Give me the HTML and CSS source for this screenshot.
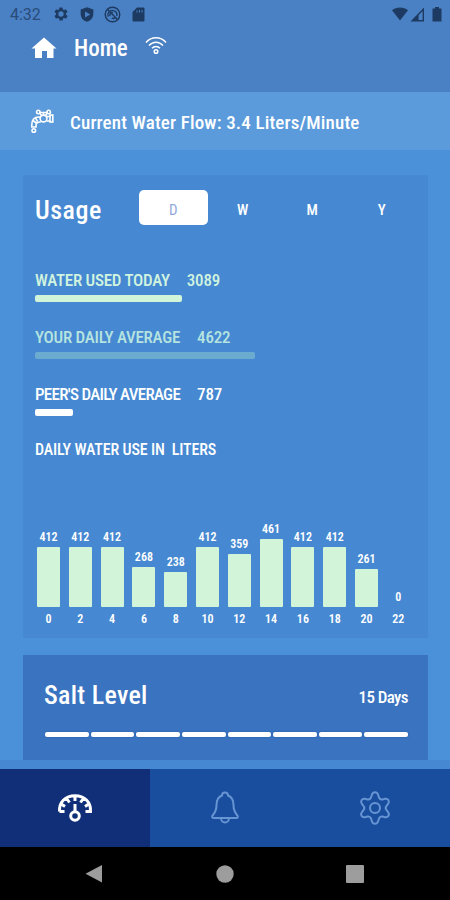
FILE: index.html
```html
<!DOCTYPE html>
<html lang="en">
<head>
    <meta charset="UTF-8">
    <meta name="viewport" content="width=device-width, initial-scale=1.0">
    <title>Home</title>
    <link rel="stylesheet" href="styles.css">
</head>
<body>
    <div class="phone">
        <header class="header">
            <div class="status">
                <span class="clock">4:32</span>
                <svg class="status-gear" width="16" height="16" viewBox="0 0 24 24"><path fill-rule="evenodd" d="M19.4 13a7.500 7.500 0 0 0 0-2l2.100-1.600a.5.5 0 0 0 .1-.6l-2-3.500a.5.5 0 0 0-.6-.2l-2.500 1a7.300 7.300 0 0 0-1.700-1l-.4-2.600a.5.5 0 0 0-.5-.4h-4a.5.5 0 0 0-.5.4L9.200 5.100a7.700 7.700 0 0 0-1.700 1l-2.500-1a.5.5 0 0 0-.6.2l-2 3.500a.5.5 0 0 0 .1.600L4.600 11a8 8 0 0 0 0 2l-2.100 1.600a.5.5 0 0 0-.1.600l2 3.500c.1.200.4.300.6.200l2.500-1c.5.400 1.100.7 1.700 1l.4 2.600c0 .3.200.4.500.4h4c.3 0 .5-.1.5-.4l.4-2.600a7.300 7.300 0 0 0 1.700-1l2.500 1c.2.100.5 0 .6-.2l2-3.500a.5.5 0 0 0-.1-.6zM12 16a4 4 0 1 1 0-8 4 4 0 0 1 0 8z"/></svg>
                <svg class="status-shield" width="16" height="17" viewBox="0 0 24 24"><path fill-rule="evenodd" d="M12 1L2.500 4.500V11c0 6 4 10.500 9.500 12 5.500-1.500 9.500-6 9.500-12V4.500zM9 7.500l8 4.500-8 4.500z"/></svg>
                <svg class="status-sync" width="17" height="17" viewBox="0 0 24 24"><circle cx="12" cy="12" r="10.300"/><path d="M6 15c-2-5 2-9 7-8.500 4 .5 6 4 5 7.500M8.500 14c-1-3 1-5 4-4.500M5 5l14 14M11 17c2 1 4 .5 5.500-1"/></svg>
                <svg class="status-card" width="13" height="15" viewBox="0 0 13 15"><path fill-rule="evenodd" d="M5 .5h6.500a1 1 0 0 1 1 1v12a1 1 0 0 1-1 1h-10a1 1 0 0 1-1-1V5zM4.500 3.500v2h1v-2zM7 3v2.500h1V3zM9.500 3v2.500h1V3z"/></svg>
                <div class="signals">
                    <svg width="18" height="14" viewBox="0 0 18 14"><path d="M1 3.200C5.500-.5 12.500-.5 17 3.200L9 13.500z"/></svg>
                    <svg width="15" height="15" viewBox="0 0 15 15"><path fill-rule="evenodd" d="M14 .5v14H.5zM12.600 4v9h-4V8.200z"/></svg>
                    <svg class="battery" width="10" height="15" viewBox="0 0 10 15"><path d="M3 0h4v1.500h2.500v13H.5v-13H3z"/></svg>
                </div>
            </div>
            <div class="title">
                <svg width="26" height="22" viewBox="0 0 26 22"><path fill="#fff" d="M13 .5l12.500 11H22.500V21H16v-7h-5v7H4v-9.500H.5z"/></svg>
                <h1><span class="text">Home</span></h1>
                <svg class="wifi" width="22" height="19" viewBox="0 0 22 19"><path d="M1 6.500C6.500.2 15.500.2 21 6.500M4 9.500c4-4.500 10-4.500 14 0M7 12.300c2.400-2.500 5.600-2.500 8 0"/><circle cx="11" cy="15.500" r="1.800"/></svg>
            </div>
        </header>

        <div class="flow">
            <svg width="25" height="25" viewBox="0 0 25 25">
                <path d="M1.800 18v-2c0-5.500 2.500-8 7-8h1.500M6 18v-1.500c0-2.500 1-3.500 4-3.500h.8M16.500 7.500h4M16.500 12h4M13.500 6V3.500M9.500 3.500h8M1 18h5.800M3 11.500l3.200 2.500M5.500 9l2 3.500M10 4.500l1.500 2M17 4.500l-1.500 2"/>
                <circle cx="13.500" cy="9.500" r="3.400"/>
                <circle cx="8.300" cy="3" r="1.700"/>
                <circle cx="18.700" cy="3" r="1.700"/>
                <rect x="20" y="6" width="2.800" height="7"/>
                <circle cx="3.800" cy="21.500" r="1.800"/>
            </svg>
            <span class="text">Current Water Flow: 3.4 Liters/Minute</span>
        </div>

        <main class="content">
            <section class="usage">
                <div class="usage-head">
                    <h2><span class="text">Usage</span></h2>
                    <div class="tabs">
                        <span class="tab active"><span class="text">D</span></span>
                        <span class="tab"><span class="text">W</span></span>
                        <span class="tab"><span class="text">M</span></span>
                        <span class="tab"><span class="text">Y</span></span>
                    </div>
                </div>

                <div class="stat today">
                    <p><span class="name text">WATER USED TODAY</span><span class="value text">3089</span></p>
                    <div class="line"></div>
                </div>
                <div class="stat average">
                    <p><span class="name text">YOUR DAILY AVERAGE</span><span class="value text">4622</span></p>
                    <div class="line"></div>
                </div>
                <div class="stat peers">
                    <p><span class="name text">PEER'S DAILY AVERAGE</span><span class="value text">787</span></p>
                    <div class="line"></div>
                </div>

                <h3><span class="text">DAILY WATER USE IN&nbsp; LITERS</span></h3>
                <div class="chart">
                    <div class="col"><span>412</span><div class="bar" style="height: 60px"></div><span class="hour">0</span></div>
                    <div class="col"><span>412</span><div class="bar" style="height: 60px"></div><span class="hour">2</span></div>
                    <div class="col"><span>412</span><div class="bar" style="height: 60px"></div><span class="hour">4</span></div>
                    <div class="col"><span>268</span><div class="bar" style="height: 40px"></div><span class="hour">6</span></div>
                    <div class="col"><span>238</span><div class="bar" style="height: 35px"></div><span class="hour">8</span></div>
                    <div class="col"><span>412</span><div class="bar" style="height: 60px"></div><span class="hour">10</span></div>
                    <div class="col"><span>359</span><div class="bar" style="height: 53px"></div><span class="hour">12</span></div>
                    <div class="col"><span>461</span><div class="bar" style="height: 68px"></div><span class="hour">14</span></div>
                    <div class="col"><span>412</span><div class="bar" style="height: 60px"></div><span class="hour">16</span></div>
                    <div class="col"><span>412</span><div class="bar" style="height: 60px"></div><span class="hour">18</span></div>
                    <div class="col"><span>261</span><div class="bar" style="height: 38px"></div><span class="hour">20</span></div>
                    <div class="col"><span>0</span><div class="bar" style="height: 0"></div><span class="hour">22</span></div>
                </div>
            </section>

            <section class="salt">
                <div class="salt-head">
                    <h2><span class="text">Salt Level</span></h2>
                    <span class="days text">15 Days</span>
                </div>
                <div class="segments">
                    <i></i><i></i><i></i><i></i><i></i><i></i><i></i><i></i>
                </div>
            </section>
        </main>

        <nav class="menu">
            <a class="active">
                <svg width="36" height="30" viewBox="0 0 36 30"><path d="M2.500 18.500C2 9 8.500 2.700 18 2.700s16 6.300 15.500 15.800h-5M2.500 18.500h5M18 3v5M10 6l2.500 3.500M26 6l-2.500 3.500M5 11.500l3 2M31 11.500l-3 2M18 11v7"/><circle cx="18" cy="23" r="4.300"/></svg>
            </a>
            <a>
                <svg width="30" height="34" viewBox="0 0 30 34"><path d="M12 4.500C12 .5 18 .5 18 4.500c4 1.500 5.500 5.500 5.500 9.500 0 5 1 7 3.500 10 1.500 1.500 1 3-1 3H4c-2 0-2.500-1.500-1-3 2.500-3 3.500-5 3.500-10 0-4 1.500-8 5.500-9.500zM11 27c0 6 8 6 8 0"/></svg>
            </a>
            <a>
                <svg width="32" height="34" viewBox="0 0 32 34"><path d="M13 3.500c1-3 5-3 6 0l1 3c.6 1.400 2 2.200 3.500 1.900l2.600-.6c3-.5 5 2.700 3 5.100l-1.700 2.200c-1 1.200-1 2.600 0 3.800l1.700 2.200c2 2.400 0 5.600-3 5.100l-2.600-.6c-1.500-.3-2.900.5-3.500 1.900l-1 3c-1 3-5 3-6 0l-1-3c-.6-1.400-2-2.200-3.500-1.900l-2.600.6c-3 .5-5-2.700-3-5.100l1.700-2.200c1-1.200 1-2.600 0-3.800l-1.700-2.200c-2-2.400 0-5.600 3-5.100l2.600.6c1.500.3 2.900-.5 3.500-1.900z"/><circle cx="16" cy="17" r="5"/></svg>
            </a>
        </nav>

        <footer class="android">
            <svg width="18" height="20" viewBox="0 0 18 20"><path d="M17 1v17.500L.5 9.800z"/></svg>
            <svg width="18" height="20" viewBox="0 0 18 20"><circle cx="9" cy="10" r="8.700"/></svg>
            <svg width="20" height="20" viewBox="0 0 20 20"><rect x="1" y="1" width="18" height="18" rx="1"/></svg>
        </footer>
    </div>
</body>
</html>
```
FILE: styles.css
```css
* {
    box-sizing: border-box;
}

body {
    margin: 0;
    font-family: Roboto, "Liberation Sans", sans-serif;
    color: #fff;
    background: #4b91d9;
}

h1, h2, h3, p {
    margin: 0;
    font-weight: 500;
}

svg {
    display: block;
    flex: none;
}

.phone {
    width: 450px;
    height: 900px;
    display: flex;
    flex-direction: column;
    overflow: hidden;
}

/* narrow lettering */
.text {
    display: inline-block;
    white-space: pre;
    font-stretch: 85%;
}

.header {
    height: 92px;
    background: #4a81c4;
}

.status {
    height: 28px;
    padding: 0 8px 0 10px;
    display: flex;
    align-items: center;
    color: #294c7b;
    fill: #1d3b62;
}

.clock {
    width: 43px;
    font-size: 16px;
}

.status-shield {
    margin-left: 10px;
}

.status-sync {
    margin-left: 9px;
    fill: none;
    stroke: #1d3b62;
    stroke-width: 2;
}

.status-card {
    margin-left: 11px;
}

.signals {
    margin-left: auto;
    display: flex;
    align-items: center;
    gap: 1px;
}

.battery {
    margin-left: 6px;
}

.title {
    height: 40px;
    padding-left: 31px;
    display: flex;
    align-items: center;
}

.title h1 {
    width: 71px;
    margin-left: 17px;
    padding-top: 2px;
    font-size: 23px;
    line-height: 40px;
}

.wifi {
    margin-bottom: 6px;
    fill: none;
    stroke: #fff;
    stroke-width: 1.5;
}

.flow {
    height: 58px;
    padding: 2px 0 0 30px;
    display: flex;
    align-items: center;
    gap: 15px;
    background: #5c9bdb;
    font-size: 19px;
    font-weight: 500;
}

.flow .text {
    letter-spacing: 0.15px;
}

.flow svg {
    margin-bottom: 2px;
    fill: none;
    stroke: #fff;
    stroke-width: 1.6;
}

.content {
    height: 619px;
    padding: 25px 22px 0 23px;
    background: linear-gradient(#4b91d9 610px, #4688d1 610px);
}

.usage {
    height: 463px;
    padding: 15px 10px 0 12px;
    background: #4688d1;
}

.usage-head {
    height: 35px;
    display: flex;
    align-items: center;
}

.usage-head h2 {
    width: 103.500px;
    flex: none;
    padding-top: 5px;
    font-size: 26px;
    letter-spacing: 0.5px;
}

.tabs {
    display: flex;
}

.tab {
    width: 69.5px;
    height: 35px;
    padding-top: 3px;
    border-radius: 5px;
    text-align: center;
    font-size: 15px;
    font-weight: 500;
    line-height: 34px;
}

.tab.active {
    background: #fff;
    color: #92a9dc;
    font-weight: 400;
}

.stat {
    height: 57px;
    font-size: 17px;
}

.today {
    margin-top: 44px;
}

.stat p {
    height: 26px;
    display: flex;
    font-weight: 500;
    line-height: 22px;
}

.name {
    margin-right: 17px;
    letter-spacing: -0.25px;
}

.value {
    letter-spacing: -0.2px;
}

.line {
    height: 7px;
    border-radius: 2px;
    background: #fff;
}

.today p {
    color: #d0f4df;
}

.today .line {
    width: 147px;
    background: #d2f5da;
}

.average p {
    color: #b5e3e0;
}

.average .line {
    width: 220px;
    background: #6cabd0;
}

.peers .name {
    letter-spacing: -0.7px;
}

.peers .line {
    width: 38px;
}

.usage h3 {
    font-size: 16px;
    font-weight: 500;
    line-height: 19px;
    letter-spacing: -0.15px;
}

.chart {
    height: 170px;
    margin-left: -2.400px;
    display: flex;
    align-items: flex-end;
}

.col {
    width: 31.800px;
    flex: none;
    display: flex;
    flex-direction: column;
    align-items: center;
    font-size: 12px;
    font-weight: 600;
    font-stretch: 80%;
    line-height: 19px;
}

.bar {
    width: 23px;
    border-radius: 1px;
    background: #d2f5da;
}

.hour {
    padding-top: 3px;
}

.salt {
    height: 105px;
    margin-top: 17px;
    padding: 20px 20px 0 21px;
    background: #3a73bf;
}

.salt-head {
    height: 40px;
    display: flex;
    justify-content: space-between;
}

.salt h2 {
    font-size: 26px;
    line-height: 40px;
    letter-spacing: 0.3px;
}

.days {
    font-size: 17px;
    font-weight: 500;
    line-height: 45px;
    letter-spacing: -0.6px;
}

.segments {
    margin: 17px 0 0 1px;
    display: flex;
    gap: 2px;
}

.segments i {
    flex: 1;
    height: 5px;
    border-radius: 2px;
    background: #fff;
    box-shadow: 0 0 2px #1e5cad;
}

.menu {
    height: 78px;
    display: flex;
}

.menu a {
    flex: 1;
    display: flex;
    align-items: center;
    justify-content: center;
    background: #194e9f;
}

.menu a.active {
    background: #112f78;
}

.menu svg {
    fill: none;
    stroke: #6794d2;
    stroke-width: 2;
}

.menu .active svg {
    stroke: #fff;
    stroke-width: 3;
}

.android {
    height: 53px;
    padding: 0 85px;
    display: flex;
    align-items: center;
    justify-content: space-between;
    background: #000;
    fill: #9d9d9d;
}

.android svg:nth-child(2) {
    margin-left: 2px;
}
```
